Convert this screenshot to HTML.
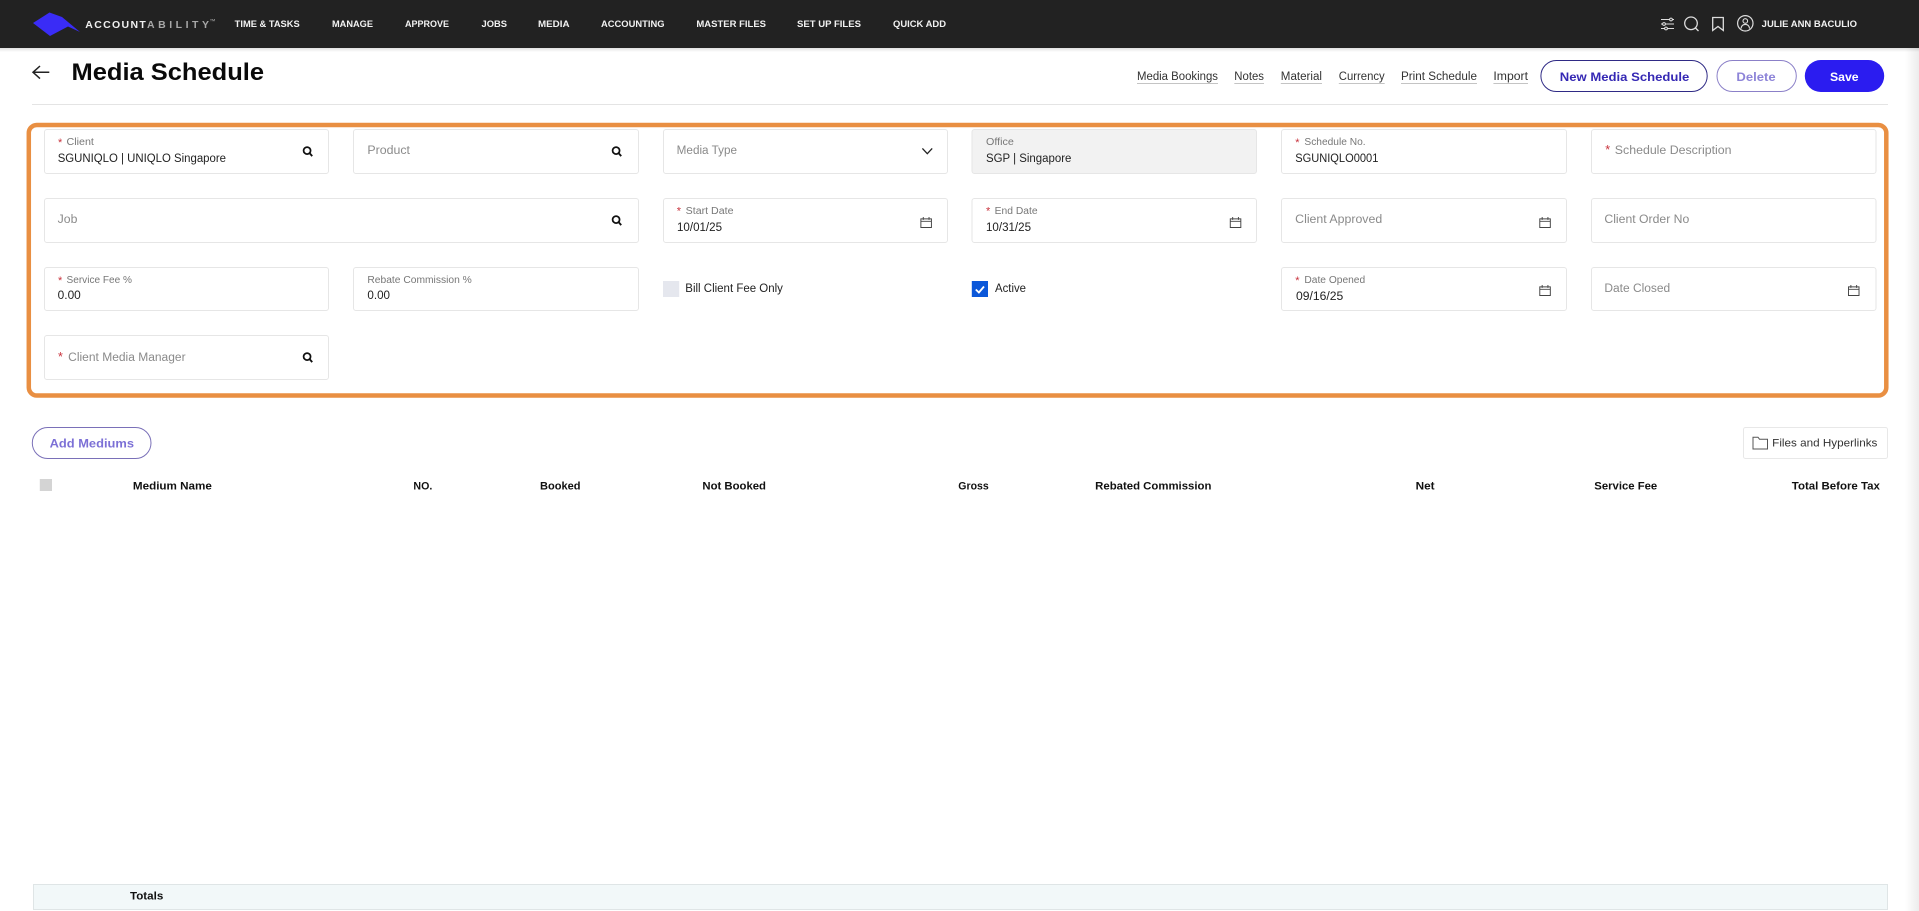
<!DOCTYPE html>
<html lang="en">
<head>
<meta charset="utf-8">
<title>Media Schedule</title>
<style>
html,body{margin:0;padding:0;background:#fff;width:1919px;height:911px;overflow:hidden}
svg{display:block}
text{font-family:"Liberation Sans",sans-serif}
.nav{font-size:9px;font-weight:700;fill:#f2f2f2}
.lnk{font-size:11.5px;fill:#333}
.lbl{font-size:10px;fill:#777}
.val{font-size:11.5px;fill:#222}
.ph{font-size:11.5px;fill:#8a8a8a}
.st{font-size:11px;fill:#c8323c}
.th{font-size:11px;font-weight:700;fill:#111}
.btn{font-size:12px;font-weight:700}
.f{fill:#fff;stroke:#e6e6e6;stroke-width:1}
</style>
</head>
<body>
<svg width="1919" height="911" viewBox="0 0 1919 911" xmlns="http://www.w3.org/2000/svg">
<defs>
<linearGradient id="sh" x1="0" y1="0" x2="0" y2="1"><stop offset="0" stop-color="#000" stop-opacity=".12"/><stop offset="1" stop-color="#000" stop-opacity="0"/></linearGradient>
<linearGradient id="sb" x1="0" y1="0" x2="1" y2="0"><stop offset="0" stop-color="#fff"/><stop offset="1" stop-color="#ececec"/></linearGradient>
<symbol id="s" viewBox="0 0 12 12" overflow="visible"><circle cx="5" cy="5" r="3.800" fill="none" stroke="#111" stroke-width="1.900"/><path d="M7.600 7.600L10.600 11" stroke="#111" stroke-width="2" fill="none"/></symbol>
<symbol id="c" viewBox="0 0 12 12" overflow="visible"><path d="M.5 2.500h11v9H.5zM.5 5h11M3 .5v3M9 .5v3" fill="none" stroke="#444" stroke-width="1"/></symbol>
</defs>

<rect x="1905" y="48" width="14" height="863" fill="url(#sb)"/>

<!-- top bar -->
<rect width="1919" height="48" fill="#222"/>
<rect y="48" width="1919" height="4" fill="url(#sh)"/>
<path d="M33 23L49.500 12.500L62 17L80 32L68 26.500L50 36Z" fill="#3a2cf6"/>
<text x="85.300" y="28" font-size="10.500" font-weight="700" fill="#f0f0f0" textLength="60.500">ACCOUNT</text>
<text x="147" y="28" font-size="10.500" font-weight="700" fill="#a8a8a8" textLength="62">ABILITY</text>
<text x="209.500" y="23" font-size="6" fill="#aaa">™</text>
<text class="nav" x="234.700" y="27" textLength="65" lengthAdjust="spacingAndGlyphs">TIME &amp; TASKS</text>
<text class="nav" x="332" y="27" textLength="41" lengthAdjust="spacingAndGlyphs">MANAGE</text>
<text class="nav" x="405" y="27" textLength="44" lengthAdjust="spacingAndGlyphs">APPROVE</text>
<text class="nav" x="481.500" y="27" textLength="25.500" lengthAdjust="spacingAndGlyphs">JOBS</text>
<text class="nav" x="538" y="27" textLength="31.500" lengthAdjust="spacingAndGlyphs">MEDIA</text>
<text class="nav" x="601" y="27" textLength="63.500" lengthAdjust="spacingAndGlyphs">ACCOUNTING</text>
<text class="nav" x="696.400" y="27" textLength="69.600" lengthAdjust="spacingAndGlyphs">MASTER FILES</text>
<text class="nav" x="797" y="27" textLength="64" lengthAdjust="spacingAndGlyphs">SET UP FILES</text>
<text class="nav" x="893" y="27" textLength="53" lengthAdjust="spacingAndGlyphs">QUICK ADD</text>

<g fill="none" stroke="#ddd" stroke-width="1">
<path d="M1661 19.500h13M1661 24h13M1661 28.500h13"/>
<circle cx="1671" cy="19.500" r="1.400" fill="#222"/><circle cx="1664" cy="24" r="1.400" fill="#222"/><circle cx="1666" cy="28.500" r="1.400" fill="#222"/>
<circle cx="1691" cy="23.300" r="6.300" stroke-width="1.300"/><path d="M1695.500 28L1698.500 31" stroke-width="1.300"/>
<path d="M1712.700 17.500h10.600v13l-5.300-4-5.300 4z" stroke-width="1.300"/>
<circle cx="1745.300" cy="23.300" r="7.700" stroke-width="1.200"/><circle cx="1745.300" cy="21" r="2.300" stroke-width="1.100"/><path d="M1741 28.600c.4-3 2-4.200 4.300-4.200s3.900 1.200 4.300 4.200" stroke-width="1.100"/>
</g>
<text class="nav" x="1761.700" y="27" textLength="95.300" lengthAdjust="spacingAndGlyphs">JULIE ANN BACULIO</text>

<!-- page header -->
<path d="M40 66L33 72.300L40 78.600M33 72.300H49.300" fill="none" stroke="#222" stroke-width="1.500"/>
<text x="71.500" y="80" font-size="24" font-weight="700" fill="#0a0a0a" textLength="192.500" lengthAdjust="spacingAndGlyphs">Media Schedule</text>
<rect x="32" y="104" width="1856" height="1" fill="#e4e4e4"/>

<g>
<text class="lnk" x="1137" y="80" textLength="81" lengthAdjust="spacingAndGlyphs">Media Bookings</text>
<text class="lnk" x="1234.300" y="80" textLength="29.700" lengthAdjust="spacingAndGlyphs">Notes</text>
<text class="lnk" x="1280.800" y="80" textLength="41.200" lengthAdjust="spacingAndGlyphs">Material</text>
<text class="lnk" x="1338.800" y="80" textLength="45.900" lengthAdjust="spacingAndGlyphs">Currency</text>
<text class="lnk" x="1401" y="80" textLength="76" lengthAdjust="spacingAndGlyphs">Print Schedule</text>
<text class="lnk" x="1493.400" y="80" textLength="34.600" lengthAdjust="spacingAndGlyphs">Import</text>
<path d="M1137 83.500h81M1234.300 83.500h29.700M1280.800 83.500h41.200M1338.800 83.500h45.900M1401 83.500h76M1493.400 83.500h34.600" stroke="#c4c4c4" stroke-width="1"/>
</g>

<rect x="1540.900" y="60.500" width="166.300" height="31" rx="15.500" fill="#fff" stroke="#2f2a85" stroke-width="1"/>
<text class="btn" x="1559.800" y="81" textLength="129.500" lengthAdjust="spacingAndGlyphs" fill="#3528b4">New Media Schedule</text>
<rect x="1717" y="60.500" width="79.300" height="31" rx="15.500" fill="#fff" stroke="#8b80c8" stroke-width="1"/>
<text class="btn" x="1736.400" y="81" textLength="39.200" lengthAdjust="spacingAndGlyphs" fill="#8d84d8">Delete</text>
<rect x="1804.800" y="60" width="79.400" height="32" rx="16" fill="#2b1cf0"/>
<text class="btn" x="1830" y="81" textLength="28.600" lengthAdjust="spacingAndGlyphs" fill="#fff">Save</text>

<!-- orange outline -->
<rect x="28.800" y="125" width="1857.500" height="270.500" rx="8" fill="#fff" stroke="#e98f42" stroke-width="4.500"/>

<!-- row 1 -->
<rect class="f" x="44.500" y="129.500" width="284" height="44" rx="2.500"/>
<rect class="f" x="353.500" y="129.500" width="285" height="44" rx="2.500"/>
<rect class="f" x="663.500" y="129.500" width="284" height="44" rx="2.500"/>
<rect class="f" x="972" y="129.500" width="284.500" height="44" rx="2.500" style="fill:#f2f2f2"/>
<rect class="f" x="1281.500" y="129.500" width="285" height="44" rx="2.500"/>
<rect class="f" x="1591.500" y="129.500" width="284.500" height="44" rx="2.500"/>

<text class="st" x="58" y="146">*</text><text class="lbl" x="66.500" y="145" textLength="27.400" lengthAdjust="spacingAndGlyphs">Client</text>
<text class="val" x="57.700" y="162" textLength="168.300" lengthAdjust="spacingAndGlyphs">SGUNIQLO | UNIQLO Singapore</text>
<use href="#s" x="302.500" y="146" width="11" height="11"/>
<text class="ph" x="367.400" y="154" textLength="42.600" lengthAdjust="spacingAndGlyphs">Product</text>
<use href="#s" x="611.500" y="146" width="11" height="11"/>
<text class="ph" x="676.700" y="154" textLength="60.300" lengthAdjust="spacingAndGlyphs">Media Type</text>
<path d="M922.400 148.400L927.300 153.700L932.200 148.400" fill="none" stroke="#222" stroke-width="1.300"/>
<text class="lbl" x="986" y="145" textLength="27.900" lengthAdjust="spacingAndGlyphs">Office</text>
<text class="val" x="986" y="162" textLength="85.400" lengthAdjust="spacingAndGlyphs">SGP | Singapore</text>
<text class="st" x="1295.200" y="146">*</text><text class="lbl" x="1304.400" y="145" textLength="61.200" lengthAdjust="spacingAndGlyphs">Schedule No.</text>
<text class="val" x="1295.200" y="162" textLength="83.200" lengthAdjust="spacingAndGlyphs">SGUNIQLO0001</text>
<text class="st" x="1605.300" y="154" style="font-size:12.500px">*</text><text class="ph" x="1614.800" y="154" textLength="116.700" lengthAdjust="spacingAndGlyphs">Schedule Description</text>

<!-- row 2 -->
<rect class="f" x="44.500" y="198.500" width="594" height="44" rx="2.500"/>
<rect class="f" x="663.500" y="198.500" width="284" height="44" rx="2.500"/>
<rect class="f" x="972" y="198.500" width="284.500" height="44" rx="2.500"/>
<rect class="f" x="1281.500" y="198.500" width="285" height="44" rx="2.500"/>
<rect class="f" x="1591.500" y="198.500" width="284.500" height="44" rx="2.500"/>

<text class="ph" x="57.700" y="223" textLength="19.700" lengthAdjust="spacingAndGlyphs">Job</text>
<use href="#s" x="611.500" y="215" width="11" height="11"/>
<text class="st" x="676.700" y="214.500">*</text><text class="lbl" x="685.700" y="214" textLength="47.800" lengthAdjust="spacingAndGlyphs">Start Date</text>
<text class="val" x="677" y="231" textLength="45" lengthAdjust="spacingAndGlyphs">10/01/25</text>
<use href="#c" x="920.400" y="216.500" width="11.500" height="11.500"/>
<text class="st" x="986" y="214.500">*</text><text class="lbl" x="994.700" y="214" textLength="42.900" lengthAdjust="spacingAndGlyphs">End Date</text>
<text class="val" x="986" y="231" textLength="45" lengthAdjust="spacingAndGlyphs">10/31/25</text>
<use href="#c" x="1229.800" y="216.500" width="11.500" height="11.500"/>
<text class="ph" x="1295.200" y="223" textLength="87" lengthAdjust="spacingAndGlyphs">Client Approved</text>
<use href="#c" x="1539.300" y="216.500" width="11.500" height="11.500"/>
<text class="ph" x="1604.400" y="223" textLength="84.900" lengthAdjust="spacingAndGlyphs">Client Order No</text>

<!-- row 3 -->
<rect class="f" x="44.500" y="267.500" width="284" height="43" rx="2.500"/>
<rect class="f" x="353.500" y="267.500" width="285" height="43" rx="2.500"/>
<rect class="f" x="1281.500" y="267.500" width="285" height="43" rx="2.500"/>
<rect class="f" x="1591.500" y="267.500" width="284.500" height="43" rx="2.500"/>

<text class="st" x="58" y="284">*</text><text class="lbl" x="66.500" y="283" textLength="65.500" lengthAdjust="spacingAndGlyphs">Service Fee %</text>
<text class="val" x="57.700" y="299" textLength="23.100" lengthAdjust="spacingAndGlyphs">0.00</text>
<text class="lbl" x="367.400" y="283" textLength="104.400" lengthAdjust="spacingAndGlyphs">Rebate Commission %</text>
<text class="val" x="367.400" y="299" textLength="22.600" lengthAdjust="spacingAndGlyphs">0.00</text>
<rect x="663" y="281" width="16.200" height="16" fill="#e5e7ee"/>
<text class="val" x="685.300" y="292" textLength="97.600" lengthAdjust="spacingAndGlyphs">Bill Client Fee Only</text>
<rect x="971.800" y="281" width="16.200" height="16" fill="#0b57d9"/>
<path d="M975.800 289.500L978.900 292.500L984 286.500" fill="none" stroke="#fff" stroke-width="1.800"/>
<text class="val" x="995" y="292" textLength="31" lengthAdjust="spacingAndGlyphs">Active</text>
<text class="st" x="1295.200" y="284">*</text><text class="lbl" x="1304.400" y="283" textLength="60.800" lengthAdjust="spacingAndGlyphs">Date Opened</text>
<text class="val" x="1296" y="300" textLength="47.300" lengthAdjust="spacingAndGlyphs">09/16/25</text>
<use href="#c" x="1539.300" y="284.500" width="11.500" height="11.500"/>
<text class="ph" x="1604.400" y="292" textLength="65.800" lengthAdjust="spacingAndGlyphs">Date Closed</text>
<use href="#c" x="1848" y="284.500" width="11.500" height="11.500"/>

<!-- row 4 -->
<rect class="f" x="44.500" y="335.500" width="284" height="44" rx="2.500"/>
<text class="st" x="58" y="361" style="font-size:12.500px">*</text><text class="ph" x="68.200" y="361" textLength="117.400" lengthAdjust="spacingAndGlyphs">Client Media Manager</text>
<use href="#s" x="302.500" y="352" width="11" height="11"/>

<!-- action row -->
<rect x="32.300" y="427.500" width="118.700" height="31" rx="15.500" fill="#fff" stroke="#7a70b8" stroke-width="1"/>
<text x="49.600" y="447.500" font-size="12" font-weight="700" fill="#7c70d6" textLength="84.400" lengthAdjust="spacingAndGlyphs">Add Mediums</text>
<rect x="1743.500" y="427.500" width="144" height="31" rx="2" fill="#fff" stroke="#e8e8e8" stroke-width="1"/>
<path d="M1753 449V437.200h5l1.500 2h8V449z" fill="none" stroke="#555" stroke-width="1"/>
<text x="1772.200" y="446.700" font-size="11" fill="#333" textLength="105.200" lengthAdjust="spacingAndGlyphs">Files and Hyperlinks</text>

<!-- table head -->
<rect x="39.800" y="479" width="12.200" height="12" fill="#d4d4d4"/>
<text class="th" x="132.900" y="489.700" textLength="79" lengthAdjust="spacingAndGlyphs">Medium Name</text>
<text class="th" x="413.400" y="489.700" textLength="18.900" lengthAdjust="spacingAndGlyphs">NO.</text>
<text class="th" x="540" y="489.700" textLength="40.500" lengthAdjust="spacingAndGlyphs">Booked</text>
<text class="th" x="702.400" y="489.700" textLength="63.600" lengthAdjust="spacingAndGlyphs">Not Booked</text>
<text class="th" x="958.300" y="489.700" textLength="30.400" lengthAdjust="spacingAndGlyphs">Gross</text>
<text class="th" x="1095.200" y="489.700" textLength="116.200" lengthAdjust="spacingAndGlyphs">Rebated Commission</text>
<text class="th" x="1415.600" y="489.700" textLength="19" lengthAdjust="spacingAndGlyphs">Net</text>
<text class="th" x="1594.300" y="489.700" textLength="62.900" lengthAdjust="spacingAndGlyphs">Service Fee</text>
<text class="th" x="1791.800" y="489.700" textLength="88.100" lengthAdjust="spacingAndGlyphs">Total Before Tax</text>

<!-- totals -->
<rect x="33.500" y="884.500" width="1854" height="25" fill="#f2f8f9" stroke="#dfe5e6" stroke-width="1"/>
<text class="th" x="130" y="899.700" textLength="33.300" lengthAdjust="spacingAndGlyphs">Totals</text>
</svg>
</body>
</html>
